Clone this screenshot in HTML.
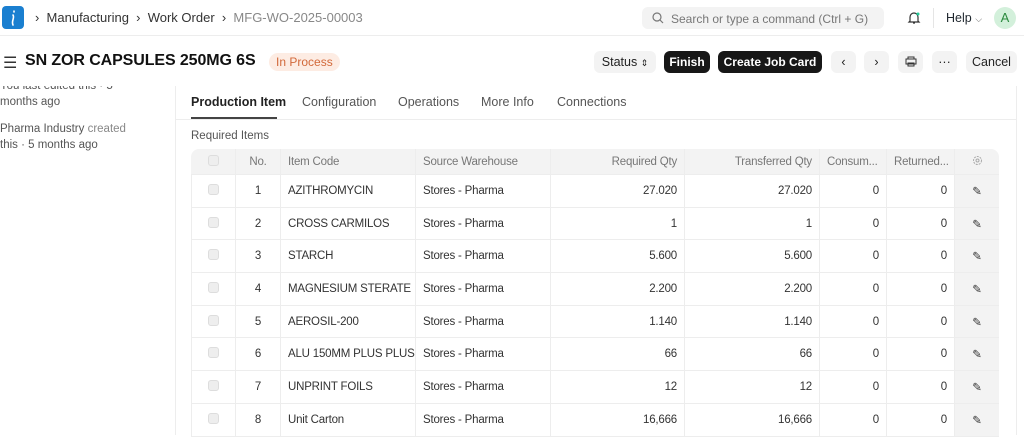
<!DOCTYPE html>
<html><head><meta charset="utf-8"><style>
*{box-sizing:border-box;margin:0;padding:0}
body{width:1024px;height:435px;overflow:hidden;background:#fff;font-family:"Liberation Sans",sans-serif;color:#1f272e;position:relative;font-size:13px}
.abs{position:absolute}
.nav{left:0;top:0;width:1024px;height:36px;border-bottom:1px solid #ededed}
.logo{left:2px;top:6px;width:22px;height:23px;background:#1a7fd0;border-radius:4px}
.bc{top:10px;font-size:13px;color:#333}
.search{left:642px;top:7px;width:242px;height:22px;background:#f3f3f3;border-radius:6px;color:#777;font-size:12px;padding:5px 0 0 29px}
.btn{top:51px;height:22px;background:#f3f3f3;border-radius:6px;font-size:12.5px;text-align:center;line-height:22px;color:#222}
.dark{background:#171717;color:#fff;font-weight:bold;font-size:12px}
.tab{top:95px;font-size:12.5px;color:#555}
table{position:absolute;left:191px;top:149px;width:808px;table-layout:fixed;border-collapse:separate;border-spacing:0;font-size:11.5px;color:#333;letter-spacing:-0.2px}
td{border-right:1px solid #ededed;border-bottom:1px solid #ededed;height:32.7px;padding:0 7px;white-space:nowrap;overflow:hidden}
tr.h td{background:#f3f3f3;height:26px;color:#777}
td.r{text-align:right}
td.e{background:#f3f3f3;text-align:center;border-right:none;padding:0}
.cb{display:inline-block;width:11px;height:11px;border:1px solid #ddd;background:#eee;border-radius:3px}
</style></head><body>
<div class="abs nav"></div>
<div class="abs logo"><svg width="22" height="23"><path d="M12 5v1M11 9c2 3-2 6 0 10" stroke="#fff" stroke-width="1.6" fill="none" stroke-linecap="round"/></svg></div>
<div class="abs bc" style="left:35px">›&nbsp;&nbsp;Manufacturing&nbsp;&nbsp;›&nbsp;&nbsp;Work Order&nbsp;&nbsp;›&nbsp;&nbsp;<span style="color:#888">MFG-WO-2025-00003</span></div>
<div class="abs search">Search or type a command (Ctrl + G)</div>
<svg class="abs" style="left:652px;top:12px" width="12" height="12"><circle cx="5" cy="5" r="4" stroke="#777" fill="none" stroke-width="1.2"/><path d="M8 8l3 3" stroke="#777" stroke-width="1.2"/></svg>
<svg class="abs" style="left:907px;top:10px" width="14" height="15"><path d="M3 11V7a4 4 0 018 0v4l1 1H2z M6 13h2" stroke="#333" fill="none" stroke-width="1.2"/><circle cx="11" cy="4" r="1.5" fill="#2c9"/></svg>
<div class="abs" style="left:933px;top:8px;width:1px;height:20px;background:#e5e5e5"></div>
<div class="abs" style="left:946px;top:11px;font-size:12.5px">Help <span style="font-size:9px;color:#666">⌵</span></div>
<div class="abs" style="left:994px;top:7px;width:22px;height:22px;border-radius:50%;background:#d3f0db;color:#2b8a3e;text-align:center;line-height:22px;font-size:13px">A</div>

<div class="abs" style="left:3px;top:53px;font-size:16px;color:#333">☰</div>
<div class="abs" style="left:25px;top:52px;font-size:16px;font-weight:bold;color:#111;letter-spacing:-0.1px">SN ZOR CAPSULES 250MG 6S</div>
<div class="abs" style="left:269px;top:53px;height:18px;padding:0 7px;background:#fdece3;color:#d2693a;border-radius:9px;font-size:12px;line-height:18px">In Process</div>
<div class="abs btn" style="left:594px;width:62px">Status <span style="font-size:9px">⇕</span></div>
<div class="abs btn dark" style="left:664px;width:46px">Finish</div>
<div class="abs btn dark" style="left:718px;width:104px">Create Job Card</div>
<div class="abs btn" style="left:831px;width:25px">‹</div>
<div class="abs btn" style="left:864px;width:25px">›</div>
<div class="abs btn" style="left:898px;width:25px"><svg width="12" height="11" style="margin-top:5px"><path d="M3 3V1h6v2M1 3h10v5H1zM3 7h6v3H3z" stroke="#333" fill="none"/></svg></div>
<div class="abs btn" style="left:932px;width:25px">···</div>
<div class="abs btn" style="left:966px;width:51px">Cancel</div>

<div class="abs" style="left:0;top:86px;font-size:11.5px;color:#555;line-height:16px;width:170px;height:24px;overflow:hidden"><div style="margin-top:-8px">You last edited this · 5<br>months ago</div></div>
<div class="abs" style="left:0;top:121px;font-size:11.5px;color:#555;line-height:16px">Pharma Industry <span style="color:#888">created</span><br>this · 5 months ago</div>
<div class="abs" style="left:175px;top:86px;width:1px;height:349px;background:#ededed"></div>
<div class="abs" style="left:1016px;top:86px;width:1px;height:349px;background:#ededed"></div>

<div class="abs tab" style="left:191px;color:#222;font-weight:bold">Production Item</div>
<div class="abs tab" style="left:302px">Configuration</div>
<div class="abs tab" style="left:398px">Operations</div>
<div class="abs tab" style="left:481px">More Info</div>
<div class="abs tab" style="left:557px">Connections</div>
<div class="abs" style="left:176px;top:119px;width:840px;height:1px;background:#ededed"></div>
<div class="abs" style="left:191px;top:117px;width:86px;height:2px;background:#444"></div>
<div class="abs" style="left:191px;top:130px;font-size:11.5px;color:#555">Required Items</div>

<table>
<colgroup><col style="width:45px"><col style="width:45px"><col style="width:135px"><col style="width:135px"><col style="width:134px"><col style="width:135px"><col style="width:67px"><col style="width:68px"><col style="width:44px"></colgroup>
<tr class="h"><td style="text-align:center;border-radius:8px 0 0 0"><span class="cb"></span></td><td style="text-align:center">No.</td><td>Item Code</td><td>Source Warehouse</td><td class="r">Required Qty</td><td class="r">Transferred Qty</td><td>Consum...</td><td>Returned...</td><td class="e" style="border-radius:0 8px 0 0"><svg width="11" height="11"><circle cx="5.5" cy="5.5" r="4" stroke="#aaa" fill="none" stroke-dasharray="2 1"/><circle cx="5.5" cy="5.5" r="1.5" stroke="#aaa" fill="none"/></svg></td></tr>
<tr><td style="text-align:center;border-left:1px solid #ededed"><span class="cb"></span></td><td style="text-align:center">1</td><td>AZITHROMYCIN</td><td>Stores - Pharma</td><td class="r">27.020</td><td class="r">27.020</td><td class="r">0</td><td class="r">0</td><td class="e">✎</td></tr>
<tr><td style="text-align:center;border-left:1px solid #ededed"><span class="cb"></span></td><td style="text-align:center">2</td><td>CROSS CARMILOS</td><td>Stores - Pharma</td><td class="r">1</td><td class="r">1</td><td class="r">0</td><td class="r">0</td><td class="e">✎</td></tr>
<tr><td style="text-align:center;border-left:1px solid #ededed"><span class="cb"></span></td><td style="text-align:center">3</td><td>STARCH</td><td>Stores - Pharma</td><td class="r">5.600</td><td class="r">5.600</td><td class="r">0</td><td class="r">0</td><td class="e">✎</td></tr>
<tr><td style="text-align:center;border-left:1px solid #ededed"><span class="cb"></span></td><td style="text-align:center">4</td><td>MAGNESIUM STERATE</td><td>Stores - Pharma</td><td class="r">2.200</td><td class="r">2.200</td><td class="r">0</td><td class="r">0</td><td class="e">✎</td></tr>
<tr><td style="text-align:center;border-left:1px solid #ededed"><span class="cb"></span></td><td style="text-align:center">5</td><td>AEROSIL-200</td><td>Stores - Pharma</td><td class="r">1.140</td><td class="r">1.140</td><td class="r">0</td><td class="r">0</td><td class="e">✎</td></tr>
<tr><td style="text-align:center;border-left:1px solid #ededed"><span class="cb"></span></td><td style="text-align:center">6</td><td>ALU 150MM PLUS PLUS</td><td>Stores - Pharma</td><td class="r">66</td><td class="r">66</td><td class="r">0</td><td class="r">0</td><td class="e">✎</td></tr>
<tr><td style="text-align:center;border-left:1px solid #ededed"><span class="cb"></span></td><td style="text-align:center">7</td><td>UNPRINT FOILS</td><td>Stores - Pharma</td><td class="r">12</td><td class="r">12</td><td class="r">0</td><td class="r">0</td><td class="e">✎</td></tr>
<tr><td style="text-align:center;border-left:1px solid #ededed"><span class="cb"></span></td><td style="text-align:center">8</td><td>Unit Carton</td><td>Stores - Pharma</td><td class="r">16,666</td><td class="r">16,666</td><td class="r">0</td><td class="r">0</td><td class="e">✎</td></tr>
</table>
</body></html>
